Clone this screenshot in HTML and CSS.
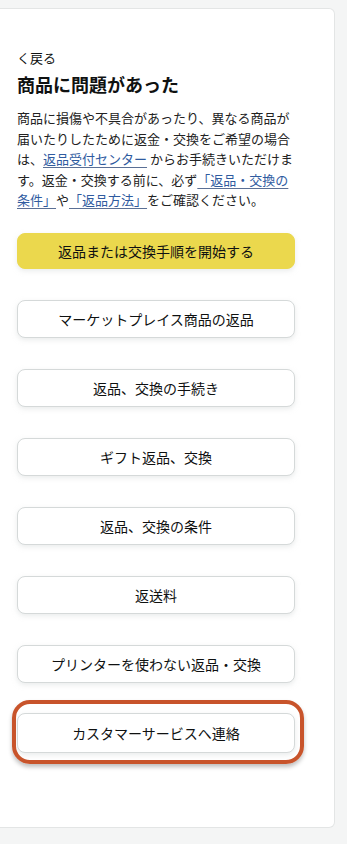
FILE: index.html
```html
<!DOCTYPE html>
<html lang="ja">
<head>
<meta charset="utf-8">
<link rel="stylesheet" href="styles.css">
</head>
<body>
<main class="card">
  <a class="back" href="#">く戻る</a>
  <h1 class="title">商品に問題があった</h1>
  <p class="desc">商品に損傷や不具合があったり、異なる商品が届いたりしたために返金・交換をご希望の場合は、<a href="#">返品受付センター</a> からお手続きいただけます。返金・交換する前に、必ず<a href="#">「返品・交換の条件」</a>や<a href="#">「返品方法」</a>をご確認ください。</p>
  <div class="actions">
    <button class="btn primary">返品または交換手順を開始する</button>
    <button class="btn">マーケットプレイス商品の返品</button>
    <button class="btn">返品、交換の手続き</button>
    <button class="btn">ギフト返品、交換</button>
    <button class="btn">返品、交換の条件</button>
    <button class="btn">返送料</button>
    <button class="btn">プリンターを使わない返品・交換</button>
    <div class="highlight"><button class="btn">カスタマーサービスへ連絡</button></div>
  </div>
</main>
</body>
</html>
```

FILE: styles.css
```css
* { box-sizing: border-box; }
html, body { margin: 0; padding: 0; }
body {
  background: #f4f5f5;
  font-family: "Noto Sans CJK JP", "Noto Sans", sans-serif;
  color: #0f1111;
  padding-top: 8px;
  height: 844px;
}
.card {
  width: 335px;
  height: 820px;
  background: #fff;
  border: 1px solid #e3e5e5;
  border-left: none;
  border-radius: 0 6px 6px 0;
  padding: 40px 0 0 17px;
}
.back {
  display: block;
  font-size: 13px;
  line-height: 18px;
  color: #0f1111;
  text-decoration: none;
}
.title {
  margin: 4px 0 0;
  font-size: 18px;
  line-height: 26px;
  font-weight: 700;
}
.desc {
  margin: 11px 0 0;
  width: 280px;
  font-size: 13px;
  line-height: 20.5px;
  color: #222;
}
.desc a {
  color: #2f5b9f;
  text-decoration: underline;
  text-decoration-color: #5a6f95;
  text-underline-offset: 3px;
}
.actions {
  margin-top: 22px;
  width: 278px;
  display: flex;
  flex-direction: column;
  gap: 31px;
}
.btn {
  display: block;
  width: 278px;
  height: 38px;
  border: 1px solid #d5d9d9;
  border-radius: 8px;
  background: #fff;
  box-shadow: 0 2px 5px rgba(213, 217, 217, 0.5);
  font-family: inherit;
  font-size: 14px;
  color: #0f1111;
  padding: 0;
}
.btn.primary {
  height: 36px;
  background: #ebd84d;
  border-color: #ebd84d;
  box-shadow: 0 2px 5px rgba(213, 217, 217, 0.5);
}
.highlight {
  position: relative;
  margin-top: -1px;
}
.highlight .btn { height: 40px; }
.highlight::after {
  content: "";
  position: absolute;
  top: -13px;
  left: -5px;
  right: -9px;
  bottom: -11px;
  border: 4px solid #c8542b;
  border-radius: 18px;
  box-shadow: 0 3px 4px rgba(0, 0, 0, 0.25);
  pointer-events: none;
}
```
